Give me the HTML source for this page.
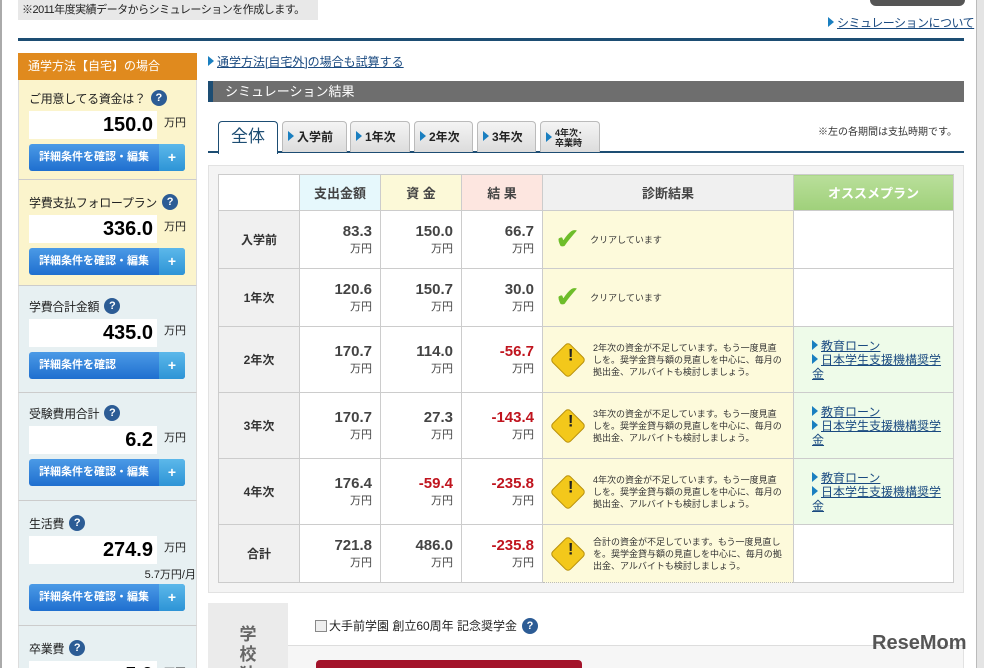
<!DOCTYPE html>
<html><head><meta charset="utf-8"><style>
*{box-sizing:border-box;margin:0;padding:0}
html,body{width:984px;height:668px;overflow:hidden}
body{background:#fff;font-family:"Liberation Sans","Noto Sans CJK JP",sans-serif;color:#222;position:relative;font-size:12px}
.abs{position:absolute}
a{color:#1a4a80;text-decoration:underline}
.tri{display:inline-block;width:0;height:0;border-left:6px solid #1a7fc0;border-top:5px solid transparent;border-bottom:5px solid transparent;margin-right:3px;vertical-align:0}
.sec{position:absolute;left:18px;width:179px;border-left:1px solid #ddd;border-right:1px solid #ddd;border-bottom:1px solid #ccc;padding:8px 10px;overflow:hidden}
.sec .lbl{font-size:12px;display:flex;align-items:center;height:20px;white-space:nowrap;letter-spacing:-0.3px}
.q{display:inline-block;flex:none;width:16px;height:16px;border-radius:50%;background:#2c5c95;color:#fff;font-size:11px;font-weight:bold;text-align:center;line-height:16px;margin-left:5px}
.val{display:flex;align-items:center;margin-top:3px;white-space:nowrap}
.val b{display:block;width:130px;height:28px;background:#fff;text-align:right;font-size:20px;line-height:28px;padding-right:4px;font-family:"Liberation Sans",sans-serif;color:#000}
.val span{margin-left:7px;font-size:11px;align-self:flex-start;margin-top:3px}
.btn{margin-top:5px;width:156px;height:27px;border-radius:3px;background:linear-gradient(#4b9ae6,#1f6fcf);color:#fff;font-size:11px;font-weight:bold;line-height:27px;padding-left:10px;position:relative;white-space:nowrap}
.btn:after{content:"+";position:absolute;right:0;top:0;width:26px;height:27px;background:linear-gradient(#5cb8ea,#2d94d6);border-radius:0 3px 3px 0;text-align:center;font-size:14px;line-height:27px}
.tab{position:absolute;top:121px;height:31px;background:linear-gradient(#f4f4f4,#dcdcdc);border:1px solid #bbb;border-bottom:none;border-radius:4px 4px 0 0;font-size:12px;font-weight:bold;line-height:30px;padding-left:5px;white-space:nowrap}
table{border-collapse:collapse;position:absolute;left:218px;top:174px;width:736px;table-layout:fixed}
td{border:1px solid #ccc;font-size:12px}
.h td{height:36px;text-align:center;font-weight:bold;font-size:13px;color:#444}
.rl{background:#f0f0f0;text-align:center;font-weight:bold;color:#333}
.n{text-align:right;padding-right:8px;background:#fff;color:#444}
.n b{font-size:15px;display:block;font-family:"Liberation Sans",sans-serif}
.n i{font-style:normal;font-size:11px;display:block}
.r b{color:#c0141e}
.dg{background:#fdfadb;font-size:9px;line-height:12px;padding:0 8px 0 12px;border-bottom:1px dotted #bbb;color:#333}
.dg div{display:flex;align-items:center}
.ic{flex:none;width:26px;height:26px;background:#f3c81b;transform:rotate(45deg);border:1px solid #b8900c;border-radius:4px;margin-right:12px;position:relative}
.ic:after{content:"!";position:absolute;transform:rotate(-45deg);left:8px;top:1px;font-size:17px;font-weight:bold;color:#222}
.ck{flex:none;font-size:30px;color:#6ebd2a;margin-right:10px;line-height:30px}
.pl{background:#eefbe9;font-size:12px;padding:0 12px 0 18px;line-height:14px}
.pl a{color:#1a4a80}
</style></head><body>
<div class="abs" style="left:0;top:0;width:2px;height:668px;background:#aaa"></div>
<div class="abs" style="left:976px;top:0;width:8px;height:668px;background:#e4e4e4;border-left:1px solid #bbb"></div>
<div class="abs" style="left:18px;top:0;width:300px;height:20px;background:#e8e8e8;font-size:11px;line-height:20px;padding-left:4px;white-space:nowrap;letter-spacing:-0.5px">※2011年度実績データからシミュレーションを作成します。</div>
<div class="abs" style="left:870px;top:0;width:95px;height:6px;background:#555;border-radius:0 0 6px 6px"></div>
<div class="abs" style="left:828px;top:14px;font-size:12px;white-space:nowrap;letter-spacing:-0.5px"><span class="tri"></span><a>シミュレーションについて</a></div>
<div class="abs" style="left:18px;top:38px;width:946px;height:3px;background:#1d4d73"></div>

<div class="abs" style="left:18px;top:53px;width:179px;height:27px;background:#e08a1e;color:#fff;font-size:12px;line-height:27px;padding-left:10px">通学方法【自宅】の場合</div>
<div class="sec" style="top:80px;height:100px;background:#fbf4cc"><div class="lbl">ご用意してる資金は？<span class="q">?</span></div><div class="val"><b>150.0</b><span>万円</span></div><div class="btn">詳細条件を確認・編集</div></div>
<div class="sec" style="top:180px;height:106px;background:#fbf4cc;padding-top:12px"><div class="lbl">学費支払フォロープラン<span class="q">?</span></div><div class="val"><b>336.0</b><span>万円</span></div><div class="btn">詳細条件を確認・編集</div></div>
<div class="sec" style="top:286px;height:107px;background:#e7f0f2;padding-top:10px"><div class="lbl">学費合計金額<span class="q">?</span></div><div class="val"><b>435.0</b><span>万円</span></div><div class="btn">詳細条件を確認</div></div>
<div class="sec" style="top:393px;height:108px;background:#e7f0f2;padding-top:10px"><div class="lbl">受験費用合計<span class="q">?</span></div><div class="val"><b>6.2</b><span>万円</span></div><div class="btn">詳細条件を確認・編集</div></div>
<div class="sec" style="top:501px;height:125px;background:#e7f0f2;padding-top:12px"><div class="lbl">生活費<span class="q">?</span></div><div class="val"><b>274.9</b><span>万円</span></div><div style="text-align:right;font-size:11px;margin-top:2px;margin-right:-10px;white-space:nowrap">5.7万円/月</div><div class="btn" style="margin-top:2px">詳細条件を確認・編集</div></div>
<div class="sec" style="top:626px;height:60px;background:#e7f0f2;padding-top:12px"><div class="lbl">卒業費<span class="q">?</span></div><div class="val"><b>5.0</b><span>万円</span></div></div>

<div class="abs" style="left:208px;top:53px;font-size:12px;white-space:nowrap"><span class="tri"></span><a>通学方法[自宅外]の場合も試算する</a></div>
<div class="abs" style="left:208px;top:81px;width:756px;height:21px;background:#6e6e6e;border-left:5px solid #1d4d73;color:#fff;font-size:13px;line-height:21px;padding-left:12px">シミュレーション結果</div>
<div class="abs" style="left:208px;top:151px;width:756px;height:2px;background:#1d4d73"></div>
<div class="tab" style="left:218px;width:60px;height:33px;background:#fff;border-color:#1d4d73;text-align:center;padding:0;font-size:17px;font-weight:normal;color:#1d4d73">全体</div>
<div class="tab" style="left:282px;width:65px"><span class="tri"></span>入学前</div>
<div class="tab" style="left:350px;width:60px"><span class="tri"></span>1年次</div>
<div class="tab" style="left:414px;width:59px"><span class="tri"></span>2年次</div>
<div class="tab" style="left:477px;width:59px"><span class="tri"></span>3年次</div>
<div class="tab" style="left:540px;width:60px;line-height:10px;font-size:9px;padding-top:6px"><span class="tri" style="float:left;margin-top:4px"></span>4年次･<br>卒業時</div>
<div class="abs" style="left:818px;top:123px;font-size:10px;color:#333;white-space:nowrap">※左の各期間は支払時期です。</div>

<div class="abs" style="left:208px;top:165px;width:756px;height:428px;background:#f4f4f4;border:1px solid #e2e2e2"></div>
<table>
<colgroup><col style="width:81px"><col style="width:81px"><col style="width:81px"><col style="width:81px"><col style="width:251px"><col></colgroup>
<tr class="h"><td style="background:#fff"></td><td style="background:#e6f8fc">支出金額</td><td style="background:#fcf9d8">資 金</td><td style="background:#fde6e0">結 果</td><td style="background:#f0f0f0">診断結果</td><td style="background:linear-gradient(#b9df9a,#9fd07a);color:#fff">オススメプラン</td></tr>
<tr style="height:58px"><td class="rl">入学前</td><td class="n"><b>83.3</b><i>万円</i></td><td class="n"><b>150.0</b><i>万円</i></td><td class="n"><b>66.7</b><i>万円</i></td><td class="dg"><div><span class="ck">✔</span>クリアしています</div></td><td style="background:#fff"></td></tr>
<tr style="height:58px"><td class="rl">1年次</td><td class="n"><b>120.6</b><i>万円</i></td><td class="n"><b>150.7</b><i>万円</i></td><td class="n"><b>30.0</b><i>万円</i></td><td class="dg"><div><span class="ck">✔</span>クリアしています</div></td><td style="background:#fff"></td></tr>
<tr style="height:66px"><td class="rl">2年次</td><td class="n"><b>170.7</b><i>万円</i></td><td class="n"><b>114.0</b><i>万円</i></td><td class="n r"><b>-56.7</b><i>万円</i></td><td class="dg"><div><span class="ic"></span><span>2年次の資金が不足しています。もう一度見直しを。奨学金貸与額の見直しを中心に、毎月の拠出金、アルバイトも検討しましょう。</span></div></td><td class="pl"><span class="tri"></span><a>教育ローン</a><br><span class="tri"></span><a>日本学生支援機構奨学金</a></td></tr>
<tr style="height:66px"><td class="rl">3年次</td><td class="n"><b>170.7</b><i>万円</i></td><td class="n"><b>27.3</b><i>万円</i></td><td class="n r"><b>-143.4</b><i>万円</i></td><td class="dg"><div><span class="ic"></span><span>3年次の資金が不足しています。もう一度見直しを。奨学金貸与額の見直しを中心に、毎月の拠出金、アルバイトも検討しましょう。</span></div></td><td class="pl"><span class="tri"></span><a>教育ローン</a><br><span class="tri"></span><a>日本学生支援機構奨学金</a></td></tr>
<tr style="height:66px"><td class="rl">4年次</td><td class="n"><b>176.4</b><i>万円</i></td><td class="n r"><b>-59.4</b><i>万円</i></td><td class="n r"><b>-235.8</b><i>万円</i></td><td class="dg"><div><span class="ic"></span><span>4年次の資金が不足しています。もう一度見直しを。奨学金貸与額の見直しを中心に、毎月の拠出金、アルバイトも検討しましょう。</span></div></td><td class="pl"><span class="tri"></span><a>教育ローン</a><br><span class="tri"></span><a>日本学生支援機構奨学金</a></td></tr>
<tr style="height:58px"><td class="rl">合計</td><td class="n"><b>721.8</b><i>万円</i></td><td class="n"><b>486.0</b><i>万円</i></td><td class="n r"><b>-235.8</b><i>万円</i></td><td class="dg"><div><span class="ic"></span><span>合計の資金が不足しています。もう一度見直しを。奨学金貸与額の見直しを中心に、毎月の拠出金、アルバイトも検討しましょう。</span></div></td><td style="background:#fff"></td></tr>
</table>

<div class="abs" style="left:208px;top:603px;width:756px;height:65px;background:#f6f6f6;border:1px solid #e2e2e2;border-bottom:none"></div>
<div class="abs" style="left:208px;top:603px;width:80px;height:65px;background:#ebebeb;color:#666;font-size:17px;font-weight:bold;text-align:center;line-height:20px;padding-top:22px;overflow:hidden">学<br>校<br>独</div>
<div class="abs" style="left:288px;top:603px;width:676px;height:43px;background:#fff;border-bottom:1px solid #ddd"></div>
<div class="abs" style="left:315px;top:617px;font-size:12px;display:flex;align-items:center;white-space:nowrap"><span style="width:12px;height:12px;border:1px solid #888;background:#eee;margin-right:2px"></span>大手前学園 創立60周年 記念奨学金<span class="q">?</span></div>
<div class="abs" style="left:316px;top:660px;width:266px;height:8px;background:#a3132a;border-radius:4px 4px 0 0"></div>
<div class="abs" style="left:872px;top:632px;font-size:20px;font-weight:bold;color:#555">ReseMom</div>
</body></html>
